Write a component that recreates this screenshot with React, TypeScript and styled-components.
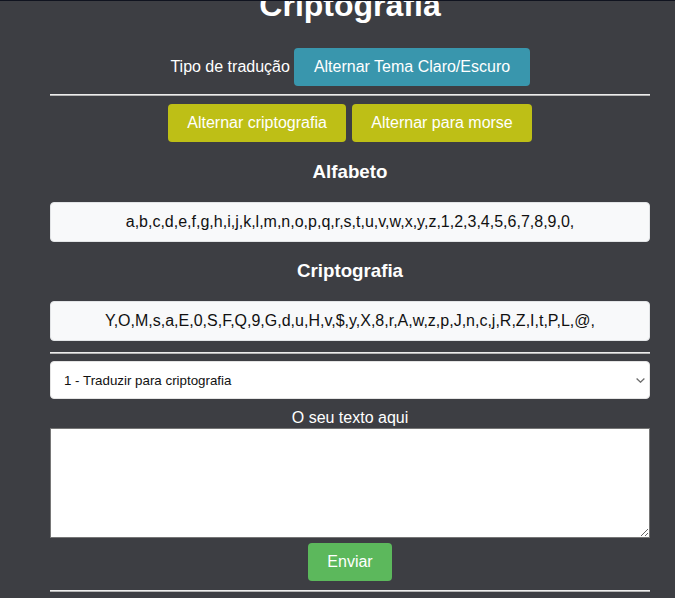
import React from "react";
import styled, { createGlobalStyle } from "styled-components";

const GlobalStyle = createGlobalStyle`
  html, body {
    margin: 0;
    padding: 0;
    background: #3d3e43;
  }
  body {
    font-family: "Liberation Sans", Arial, sans-serif;
    color: #ffffff;
  }
  * { box-sizing: border-box; }
`;

const Page = styled.div`
  border-top: 1px solid #10131f;
  overflow: hidden;
  padding: 0 25px 0 50px;
  min-height: 598px;
`;

const Container = styled.main`
  width: 600px;
  display: flex;
  flex-direction: column;
  align-items: stretch;
`;

const Title = styled.h1`
  margin: -14px 0 0;
  font-size: 32px;
  line-height: 37px;
  font-weight: 700;
  text-align: center;
  color: #ffffff;
`;

const Row = styled.div<{ $top: number; $gap: number }>`
  margin-top: ${(p) => p.$top}px;
  display: flex;
  justify-content: center;
  align-items: center;
  gap: ${(p) => p.$gap}px;
`;

const Label = styled.span`
  font-size: 16px;
  color: #ffffff;
`;

const Button = styled.button<{ $bg: string }>`
  height: 38px;
  padding: 0 19.5px;
  border: none;
  border-radius: 4px;
  background: ${(p) => p.$bg};
  color: #ffffff;
  font-family: "Liberation Sans", Arial, sans-serif;
  font-size: 16px;
  cursor: pointer;
`;

const Rule = styled.hr<{ $top: number }>`
  margin: ${(p) => p.$top}px 0 0;
  width: 100%;
  height: 0;
  border: none;
  border-top: 1px solid #ececec;
  border-bottom: 1px solid #b4b4b4;
`;

const SectionTitle = styled.h3`
  margin: 18.5px 0 0;
  font-size: 18.72px;
  line-height: 22px;
  font-weight: 700;
  text-align: center;
  color: #ffffff;
`;

const CharBox = styled.div`
  margin-top: 19px;
  height: 40px;
  display: flex;
  align-items: center;
  justify-content: center;
  background: #f8f9fa;
  border: 1px solid #e2e4e6;
  border-radius: 4px;
  color: #111111;
  font-size: 16px;
`;

const SelectWrap = styled.div`
  margin-top: 7px;
  position: relative;
  height: 38px;
`;

const Select = styled.select`
  width: 100%;
  height: 38px;
  appearance: none;
  -webkit-appearance: none;
  background: #ffffff;
  border: 1px solid #e4e4e4;
  border-radius: 4px;
  padding: 0 30px 0 13px;
  font-family: "Liberation Sans", Arial, sans-serif;
  font-size: 13.33px;
  color: #111111;
`;

const Chevron = styled.svg`
  position: absolute;
  right: 5px;
  top: 17px;
  width: 9px;
  height: 5px;
  pointer-events: none;
`;

const FieldLabel = styled.label`
  margin-top: 9px;
  font-size: 16px;
  line-height: 19px;
  text-align: center;
  color: #ffffff;
`;

const TextArea = styled.textarea`
  margin-top: 1px;
  width: 100%;
  height: 110px;
  border: 1px solid #767676;
  border-radius: 0;
  background: #ffffff;
  padding: 2px;
  font-family: "Liberation Mono", monospace;
  font-size: 13px;
`;

const alphabet = "a,b,c,d,e,f,g,h,i,j,k,l,m,n,o,p,q,r,s,t,u,v,w,x,y,z,1,2,3,4,5,6,7,8,9,0,";
const cipher = "Y,O,M,s,a,E,0,S,F,Q,9,G,d,u,H,v,$,y,X,8,r,A,w,z,p,J,n,c,j,R,Z,I,t,P,L,@,";

export default function App() {
  return (
    <>
      <GlobalStyle />
      <Page>
        <Container>
          <Title>Criptografia</Title>
          <Row $top={24} $gap={4.5}>
            <Label>Tipo de tradução</Label>
            <Button $bg="#3996ad">Alternar Tema Claro/Escuro</Button>
          </Row>
          <Rule $top={8} />
          <Row $top={8} $gap={5.5}>
            <Button $bg="#bebf16">Alternar criptografia</Button>
            <Button $bg="#bebf16">Alternar para morse</Button>
          </Row>
          <SectionTitle>Alfabeto</SectionTitle>
          <CharBox>{alphabet}</CharBox>
          <SectionTitle>Criptografia</SectionTitle>
          <CharBox>{cipher}</CharBox>
          <Rule $top={11} />
          <SelectWrap>
            <Select defaultValue="1">
              <option value="1">1 - Traduzir para criptografia</option>
              <option value="2">2 - Traduzir do criptografia</option>
            </Select>
            <Chevron viewBox="0 0 9 5">
              <path d="M0.6 0.6 L4.5 4.2 L8.4 0.6" fill="none" stroke="#6b6b6b" strokeWidth="1.3" />
            </Chevron>
          </SelectWrap>
          <FieldLabel htmlFor="texto">O seu texto aqui</FieldLabel>
          <TextArea id="texto" />
          <Row $top={5} $gap={0}>
            <Button $bg="#5cb85c">Enviar</Button>
          </Row>
          <Rule $top={9} />
        </Container>
      </Page>
    </>
  );
}
